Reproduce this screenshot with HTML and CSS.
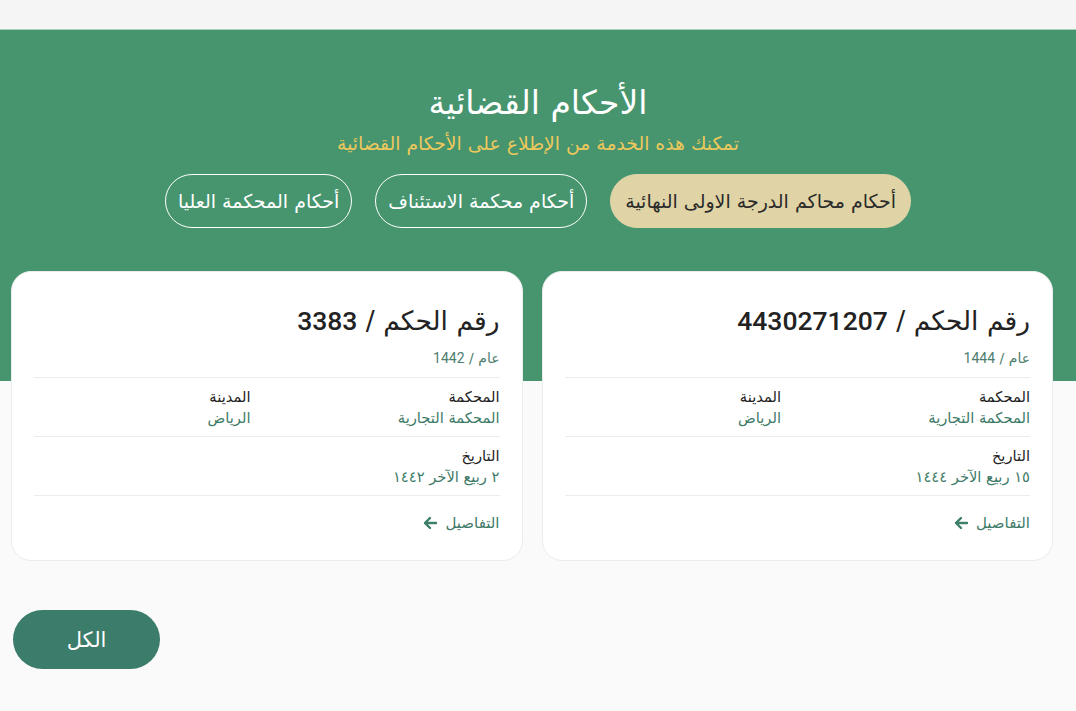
FILE: index.html
```html
<!DOCTYPE html>
<html lang="ar" dir="rtl">
<head>
<meta charset="utf-8">
<link rel="stylesheet" href="styles.css">
</head>
<body>
<div class="topbar"></div>
<section class="hero">
  <h1 class="hero-title">الأحكام القضائية</h1>
  <p class="hero-sub">تمكنك هذه الخدمة من الإطلاع على الأحكام القضائية</p>
  <div class="tabs">
    <button class="tab tab-active">أحكام محاكم الدرجة الاولى النهائية</button>
    <button class="tab">أحكام محكمة الاستئناف</button>
    <button class="tab">أحكام المحكمة العليا</button>
  </div>
</section>
<div class="cards">
  <article class="card">
    <h2 class="card-title">رقم الحكم / <span class="num">4430271207</span></h2>
    <div class="card-year">عام / <span class="num">1444</span></div>
    <div class="card-row">
      <div class="field"><div class="label">المحكمة</div><div class="value">المحكمة التجارية</div></div>
      <div class="field"><div class="label">المدينة</div><div class="value">الرياض</div></div>
    </div>
    <div class="card-row">
      <div class="field"><div class="label">التاريخ</div><div class="value">١٥ ربيع الآخر ١٤٤٤</div></div>
    </div>
    <a class="details">التفاصيل <svg class="arrow" viewBox="0 0 16 16" width="16" height="16"><path d="M14 8H3M8 3L3 8l5 5" fill="none" stroke="currentColor" stroke-width="2.4" stroke-linecap="round" stroke-linejoin="round"/></svg></a>
  </article>
  <article class="card">
    <h2 class="card-title">رقم الحكم / <span class="num">3383</span></h2>
    <div class="card-year">عام / <span class="num">1442</span></div>
    <div class="card-row">
      <div class="field"><div class="label">المحكمة</div><div class="value">المحكمة التجارية</div></div>
      <div class="field"><div class="label">المدينة</div><div class="value">الرياض</div></div>
    </div>
    <div class="card-row">
      <div class="field"><div class="label">التاريخ</div><div class="value">٢ ربيع الآخر ١٤٤٢</div></div>
    </div>
    <a class="details">التفاصيل <svg class="arrow" viewBox="0 0 16 16" width="16" height="16"><path d="M14 8H3M8 3L3 8l5 5" fill="none" stroke="currentColor" stroke-width="2.4" stroke-linecap="round" stroke-linejoin="round"/></svg></a>
  </article>
</div>
<div class="more">
  <button class="more-btn">الكل</button>
</div>
</body>
</html>
```
FILE: styles.css
```css
* { box-sizing: border-box; }
html, body { margin: 0; padding: 0; }
body {
  background: #fafafa;
  font-family: "DejaVu Sans", "Noto Sans", sans-serif;
  color: #222;
  width: 1076px;
  height: 711px;
  overflow: hidden;
}
.topbar {
  height: 30px;
  background: #f5f5f5;
  border-bottom: 1px solid #a8d3bb;
}
.hero {
  background: #46956f;
  padding: 53px 0 153px;
  text-align: center;
}
.hero-title {
  margin: 0;
  font-size: 33px;
  line-height: 40px;
  font-weight: normal;
  color: #fff;
}
.hero-sub {
  margin: 9px 0 0;
  font-size: 18.8px;
  line-height: 24px;
  color: #ecc85c;
}
.tabs {
  margin-top: 18px;
  display: flex;
  justify-content: center;
  gap: 23px;
}
.tab {
  font-family: inherit;
  height: 54px;
  padding: 0 12px;
  border-radius: 27px;
  background: transparent;
  border: 1px solid #fff;
  color: #fff;
  font-size: 19px;
}
.tab-active {
  background: #e0d4a6;
  border-color: #e0d4a6;
  color: #2a2a2a;
  padding: 0 14px;
}
.cards {
  display: flex;
  gap: 19px;
  padding: 0 23px 0 11px;
  margin-top: -110px;
}
.card {
  flex: 1 1 0;
  min-width: 0;
  background: #fff;
  border: 1px solid #ececec;
  border-radius: 20px;
  padding: 32px 22px 27px;
}
.card-title {
  margin: 0;
  font-size: 26.5px;
  line-height: 34px;
  font-weight: normal;
  color: #222;
}
.num { font-family: Roboto, "Liberation Sans", sans-serif; font-weight: 500; }
.card-year .num { font-weight: normal; }
.card-year {
  margin-top: 10px;
  font-size: 14px;
  line-height: 20px;
  color: #4d7d6e;
  padding-bottom: 9px;
  border-bottom: 1px solid #ececec;
}
.card-row {
  display: flex;
  gap: 17px;
  padding: 8px 0 8px;
  border-bottom: 1px solid #ececec;
}
.field { flex: 1 1 0; min-width: 0; }
.field:first-child { flex: 0 0 232px; }
.label {
  font-size: 14.7px;
  line-height: 21px;
  color: #222;
}
.value {
  font-size: 14.7px;
  line-height: 21px;
  color: #3e7a68;
}
.details {
  display: flex;
  align-items: center;
  gap: 7px;
  margin-top: 17px;
  font-size: 15px;
  line-height: 20px;
  color: #3e7a68;
}
.arrow { color: #3e7f6a; }
.more {
  display: flex;
  justify-content: flex-end;
  padding: 49px 0 0 13px;
}
.more-btn {
  font-family: inherit;
  width: 147px;
  height: 59px;
  border-radius: 30px;
  border: none;
  background: #3b7c6a;
  color: #fff;
  font-size: 21px;
}
```
